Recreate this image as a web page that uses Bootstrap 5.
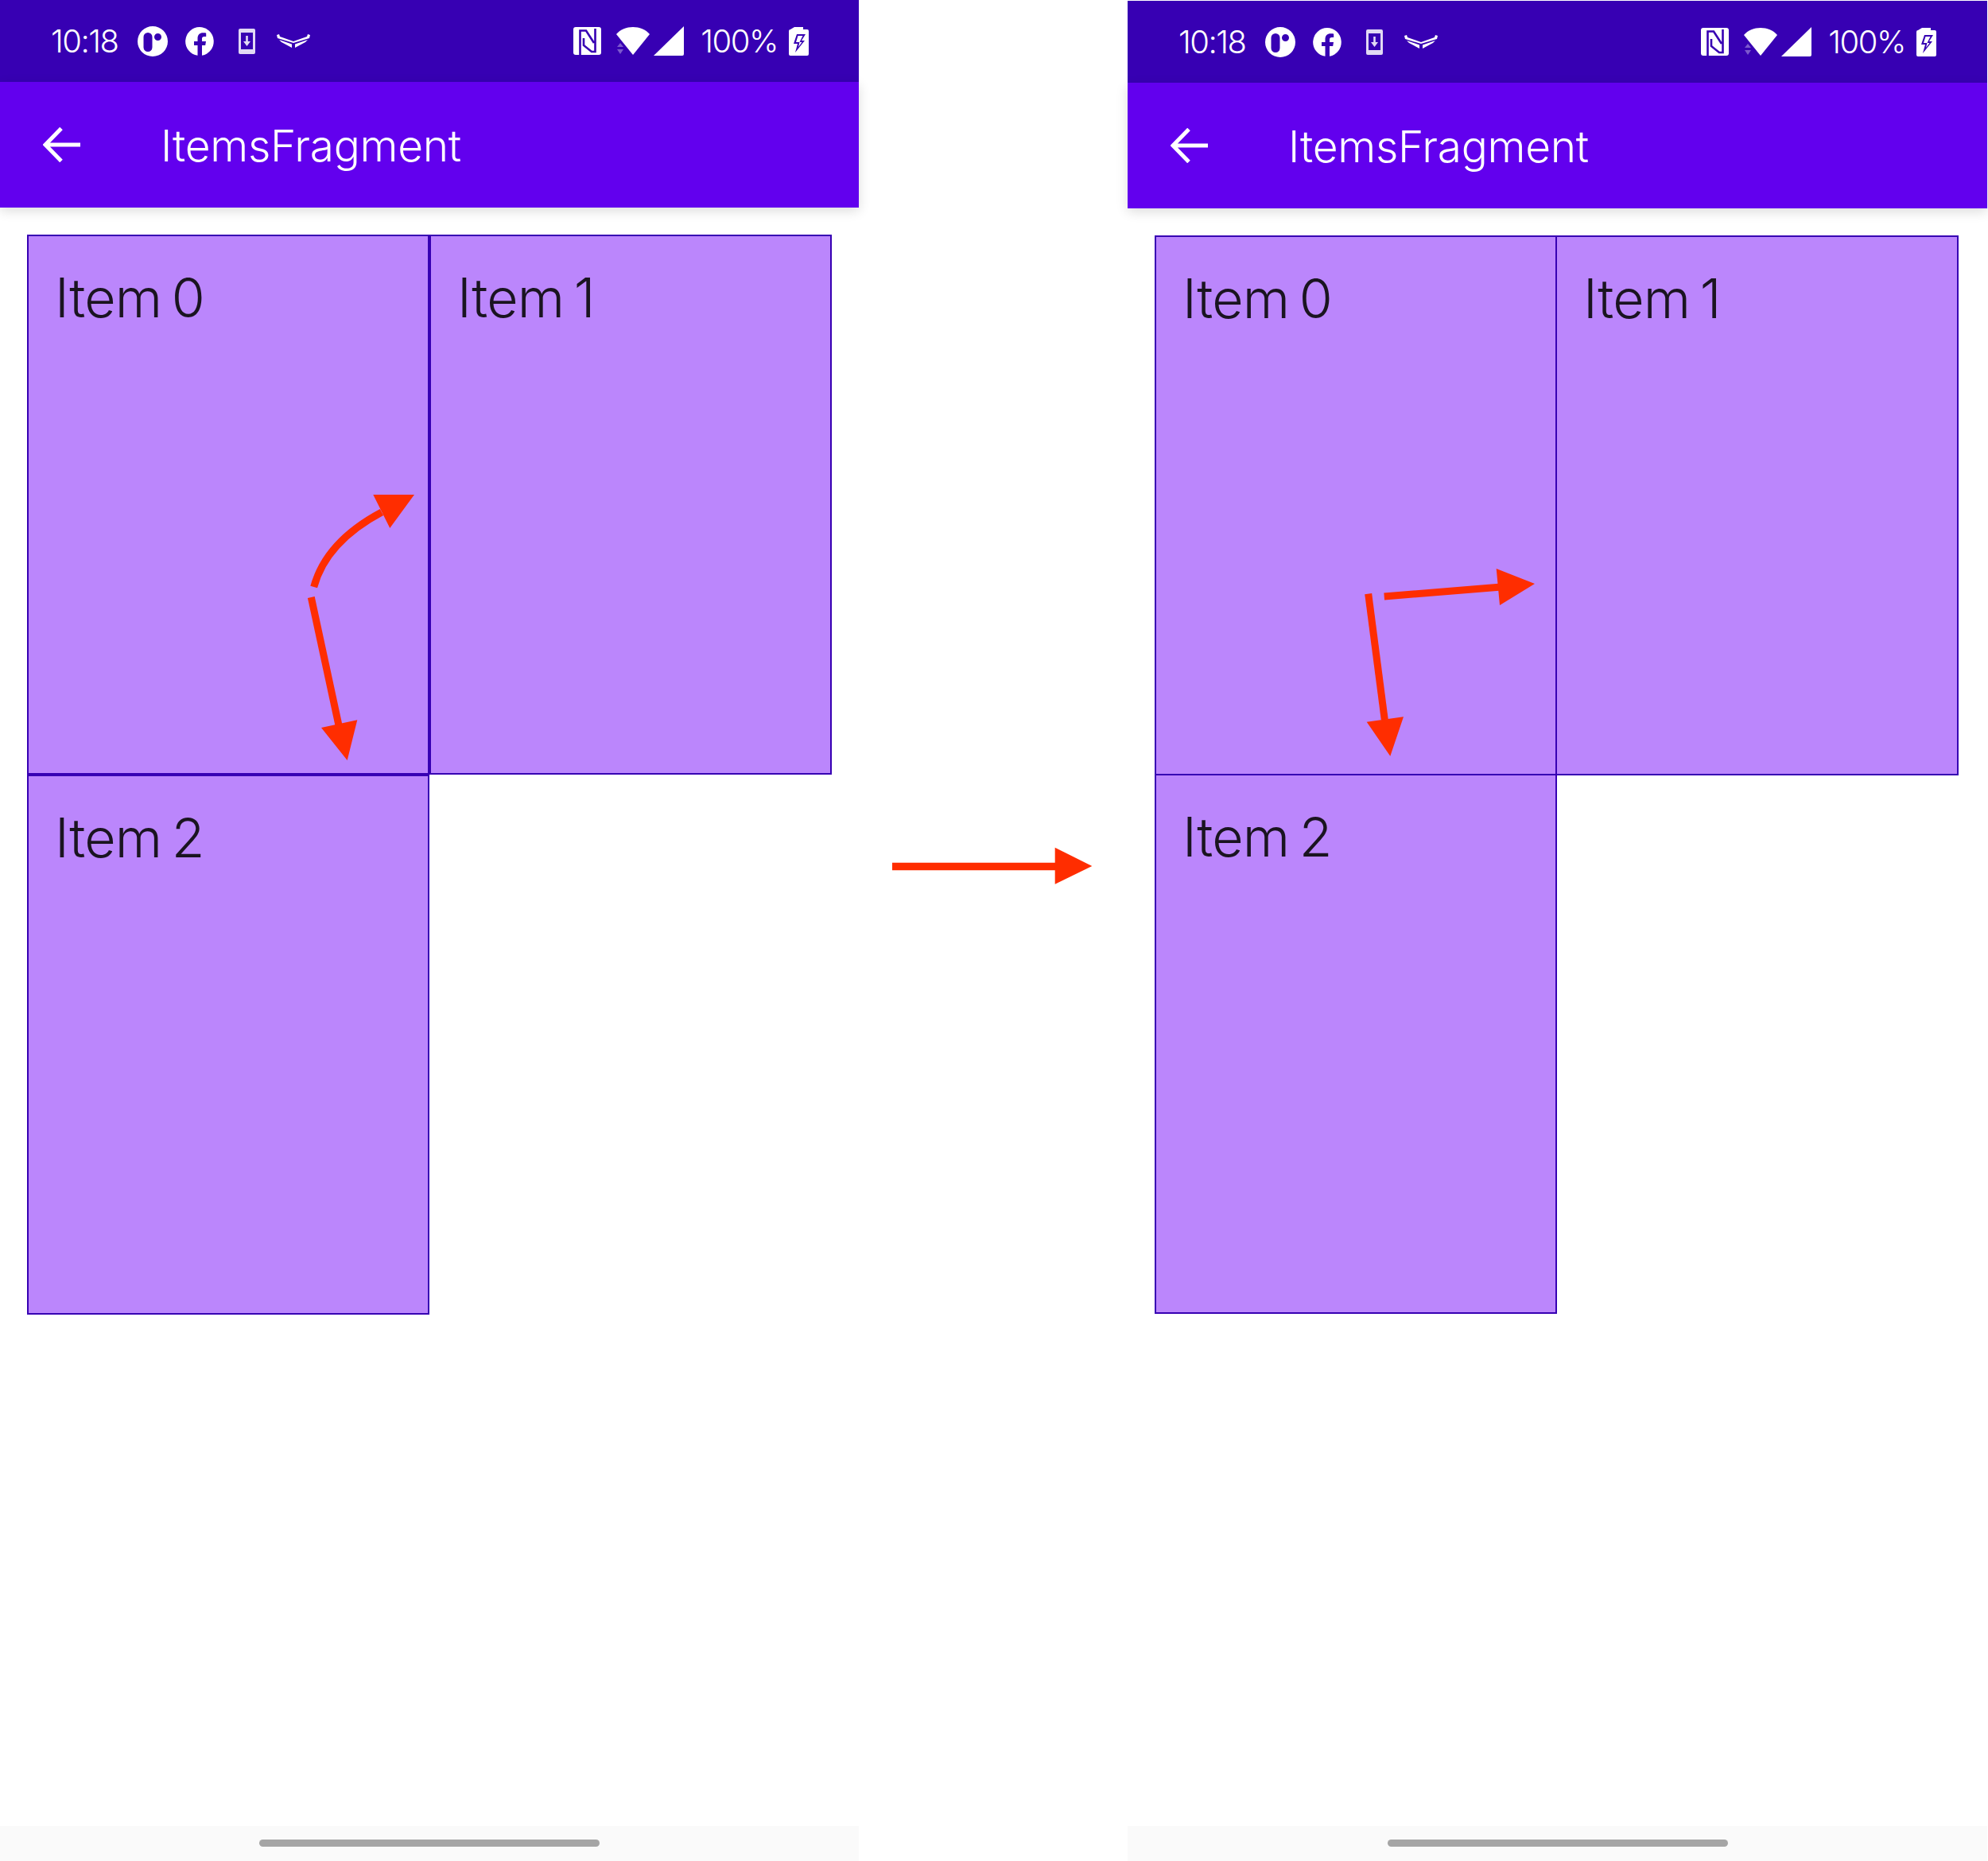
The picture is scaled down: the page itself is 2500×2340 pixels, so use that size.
<!DOCTYPE html>
<html lang="en">
<head>
  <meta charset="UTF-8" />
  <title>ItemsFragment</title>
  <link href="https://cdn.jsdelivr.net/npm/bootstrap@5.3.2/dist/css/bootstrap.min.css" rel="stylesheet" />
  <style>
    body {
      background-color: #fff;
      font-family: "Inter", "Liberation Sans", sans-serif;
      font-weight: 300;
      width: 2500px;
      height: 2340px;
      overflow: hidden;
    }
    .phone {
      width: 1080px;
      height: 2340px;
    }
    .phone-right {
      width: 1081px;
      height: 2339px;
      margin-top: 1px;
    }
    .gap-col {
      width: 338px;
    }
    .gap-col svg {
      margin-top: 1060px;
    }
    .status-bar {
      height: 103px;
      background-color: #3700b3;
      color: #fff;
      font-size: 40px;
      letter-spacing: -1.5px;
      padding-left: 64px;
      padding-right: 63px;
    }
    .status-spacer {
      flex: 1;
    }
    .status-bar svg {
      fill: #fff;
      flex: none;
    }
    .gap-pill { margin-left: 25px; }
    .gap-fb { margin-left: 22px; }
    .gap-get { margin-left: 31px; }
    .gap-chev { margin-left: 27px; }
    .gap-wifi { margin-left: 19px; }
    .gap-sig { margin-left: 5px; }
    .gap-pct { margin-left: 21px; }
    .gap-bat { margin-left: 14px; }
    .phone-right .status-bar {
      padding-right: 64px;
    }
    .nfc-mark {
      fill: none;
      stroke: #3700b3;
      stroke-width: 2.600;
    }
    .tool-bar {
      height: 158px;
      background-color: #6200ee;
      color: #fff;
      font-size: 55px;
      letter-spacing: -0.3px;
      box-shadow: 0 4px 14px rgba(0, 0, 0, .14);
      z-index: 1;
    }
    .tool-title {
      padding-top: 2px;
    }
    .back-arrow {
      margin-left: 54px;
      margin-right: 101px;
    }
    .items-grid {
      display: grid;
      grid-template-columns: 506px 506px;
      grid-template-rows: 679px 679px;
      margin: 34px 0 0 34px;
    }
    .phone-right .items-grid {
      grid-template-columns: 504px 505px;
      grid-template-rows: 677px 677px;
    }
    .item-cell {
      background-color: #bb86fc;
      border: 2px solid #3700b3;
      color: #1a1420;
      font-size: 68px;
      letter-spacing: -0.8px;
      word-spacing: -6px;
      padding: 26px 0 0 33px;
    }
    .phone-right .item-cell {
      margin-right: -2px;
      margin-bottom: -2px;
    }
    .nav-strip {
      height: 44px;
      background-color: #fafafa;
    }
    .nav-handle {
      width: 428px;
      height: 9px;
      margin-top: 17px;
      background-color: #a5a5a5;
      border-radius: 5px;
    }
    .marks {
      top: 0;
      left: 0;
      z-index: 2;
    }
  </style>
</head>
<body class="m-0 position-relative">
  <svg width="0" height="0" class="position-absolute">
    <symbol id="ic-pill" viewBox="0 0 38 38">
      <path fill-rule="evenodd" d="M19 0a19 19 0 1 1 0 38a19 19 0 1 1 0-38zM13 8a5.500 5.500 0 0 0-5.500 5.500v13a5.500 5.500 0 0 0 11 0v-13A5.500 5.500 0 0 0 13 8zM25.500 9a4.500 4.500 0 1 0 0 9a4.500 4.500 0 1 0 0-9z"/>
    </symbol>
    <symbol id="ic-fb" viewBox="0 0 36 36">
      <path d="M18 0a18 18 0 0 1 3 35.700V23h4.200l.8-5h-5v-3.200c0-1.500.7-2.800 3-2.800h2.200V7.700S24.300 7.300 22.300 7.300c-4.100 0-6.800 2.500-6.800 7V18H11v5h4.500v12.800A18 18 0 0 1 18 0z"/>
    </symbol>
    <symbol id="ic-get" viewBox="0 0 21 32">
      <path opacity=".85" fill-rule="evenodd" d="M2 0h17a2 2 0 0 1 2 2v28a2 2 0 0 1-2 2H2a2 2 0 0 1-2-2V2a2 2 0 0 1 2-2zM3 5v21h15V5zM9.200 9h2.600v7h3.200l-4.500 6-4.500-6h3.200z"/>
    </symbol>
    <symbol id="ic-chev" viewBox="0 0 42 17">
      <path d="M0 1L3 0l1 3 17 6 17-6 1-3 3 1-1 4-20 6L1 5zM3 7l16 5.500V17L6 10zM39 7l-16 5.500V17l13-7z"/>
    </symbol>
    <symbol id="ic-nfc" viewBox="0 0 35 35">
      <rect width="35" height="35" rx="3"/>
      <path class="nfc-mark" d="M8.500 35V4.500H16L26 20M13 14V23L23 31H27.500V2"/>
    </symbol>
    <symbol id="ic-wifi" viewBox="0 0 42 35">
      <path d="M0 9C5 3 13 0 21 0s16 3 21 9L21 35z"/>
      <path opacity=".35" d="M1 25l4-5 4 5zM1 28l4 6 4-6z"/>
    </symbol>
    <symbol id="ic-sig" viewBox="0 0 38 37">
      <path d="M38 0v35a2 2 0 0 1-2 2H0z"/>
    </symbol>
    <symbol id="ic-bat" viewBox="0 0 25 36">
      <path fill-rule="evenodd" d="M7 0h11v3h5a2 2 0 0 1 2 2v29a2 2 0 0 1-2 2H2a2 2 0 0 1-2-2V5a2 2 0 0 1 2-2zM10 9L6 21h5L8 32 20 17h-4l5-8zM11.500 11h6l-4 8h3L12 25l1.500-6H9z"/>
    </symbol>
  </svg>

  <div class="d-flex align-items-start">
    <div class="phone d-flex flex-column">
      <div class="status-bar d-flex align-items-center">
        <span>10:18</span>
        <svg class="gap-pill" width="38" height="38"><use href="#ic-pill"/></svg>
        <svg class="gap-fb" width="36" height="36"><use href="#ic-fb"/></svg>
        <svg class="gap-get" width="21" height="32"><use href="#ic-get"/></svg>
        <svg class="gap-chev" width="42" height="17"><use href="#ic-chev"/></svg>
        <div class="status-spacer"></div>
        <svg width="35" height="35"><use href="#ic-nfc"/></svg>
        <svg class="gap-wifi" width="42" height="35"><use href="#ic-wifi"/></svg>
        <svg class="gap-sig" width="38" height="37"><use href="#ic-sig"/></svg>
        <span class="gap-pct">100%</span>
        <svg class="gap-bat" width="25" height="36"><use href="#ic-bat"/></svg>
      </div>
      <div class="tool-bar d-flex align-items-center position-relative">
        <svg class="back-arrow" width="47" height="44" viewBox="0 0 47 44" fill="none" stroke="#fff" stroke-width="5"><path d="M47 22H3M23 1.500L3 22l20 20.500"/></svg>
        <span class="tool-title">ItemsFragment</span>
      </div>
      <div class="flex-grow-1">
        <div class="items-grid">
          <div class="item-cell">Item 0</div>
          <div class="item-cell">Item 1</div>
          <div class="item-cell">Item 2</div>
        </div>
      </div>
      <div class="nav-strip d-flex justify-content-center"><div class="nav-handle"></div></div>
    </div>

    <div class="gap-col">
      <svg width="338" height="60" viewBox="1080 1060 338 60"><path d="M1122 1089.500H1330" stroke="#ff2d00" stroke-width="9.500"/><path fill="#ff2d00" d="M1326.700 1065.700V1111.700L1373.300 1089z"/></svg>
    </div>

    <div class="phone phone-right d-flex flex-column">
      <div class="status-bar d-flex align-items-center">
        <span>10:18</span>
        <svg class="gap-pill" width="38" height="38"><use href="#ic-pill"/></svg>
        <svg class="gap-fb" width="36" height="36"><use href="#ic-fb"/></svg>
        <svg class="gap-get" width="21" height="32"><use href="#ic-get"/></svg>
        <svg class="gap-chev" width="42" height="17"><use href="#ic-chev"/></svg>
        <div class="status-spacer"></div>
        <svg width="35" height="35"><use href="#ic-nfc"/></svg>
        <svg class="gap-wifi" width="42" height="35"><use href="#ic-wifi"/></svg>
        <svg class="gap-sig" width="38" height="37"><use href="#ic-sig"/></svg>
        <span class="gap-pct">100%</span>
        <svg class="gap-bat" width="25" height="36"><use href="#ic-bat"/></svg>
      </div>
      <div class="tool-bar d-flex align-items-center position-relative">
        <svg class="back-arrow" width="47" height="44" viewBox="0 0 47 44" fill="none" stroke="#fff" stroke-width="5"><path d="M47 22H3M23 1.500L3 22l20 20.500"/></svg>
        <span class="tool-title">ItemsFragment</span>
      </div>
      <div class="flex-grow-1">
        <div class="items-grid">
          <div class="item-cell">Item 0</div>
          <div class="item-cell">Item 1</div>
          <div class="item-cell">Item 2</div>
        </div>
      </div>
      <div class="nav-strip d-flex justify-content-center"><div class="nav-handle"></div></div>
    </div>
  </div>

  <!-- red annotation arrows sit on top of the cells -->
  <svg class="marks position-absolute" width="2500" height="2340" viewBox="0 0 2500 2340" fill="none" stroke="#ff2d00" stroke-width="9">
    <path d="M394.700 738C405 700 435 668 480 644"/>
    <path d="M391.300 751L426 912"/>
    <path stroke="none" fill="#ff2d00" d="M469.300 622H521L490.300 664zM404 915L449.300 905.300L436.700 956z"/>
    <path d="M1740.700 750L1885 738.300"/>
    <path d="M1720.700 746.700L1741.300 905"/>
    <path stroke="none" fill="#ff2d00" d="M1881.700 715L1886 761L1930 734zM1718.700 907.700L1765 901.300L1748.300 950.700z"/>
  </svg>

  <script src="https://cdn.jsdelivr.net/npm/bootstrap@5.3.2/dist/js/bootstrap.bundle.min.js"></script>
</body>
</html>
